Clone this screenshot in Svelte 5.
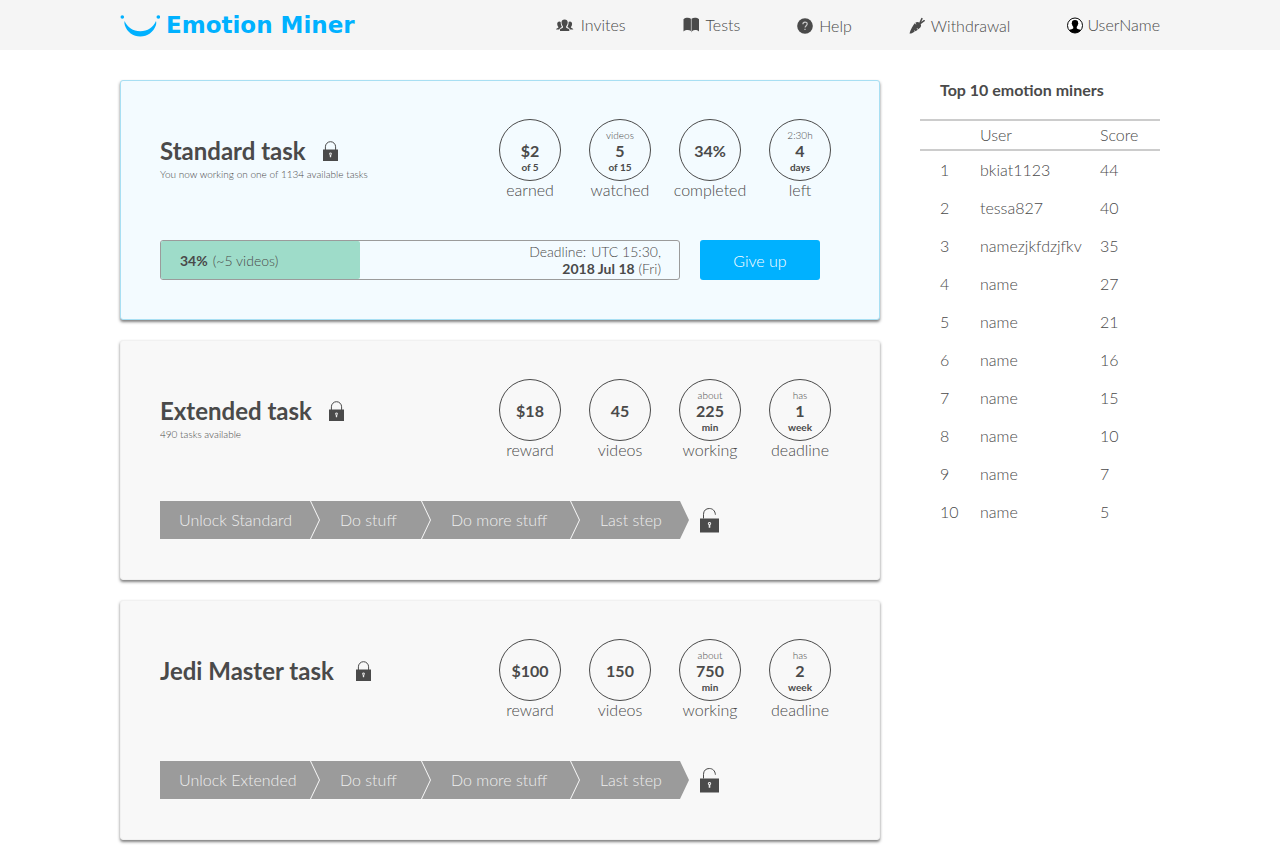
<script>
  const nav = [
    { icon: 'people', label: 'Invites' },
    { icon: 'book', label: 'Tests' },
    { icon: 'help', label: 'Help', low: true },
    { icon: 'carrot', label: 'Withdrawal', low: true },
    { icon: 'user', label: 'UserName' }
  ];

  const tasks = [
    {
      title: 'Standard task',
      note: 'You now working on one of 1134 available tasks',
      active: true,
      stats: [
        { value: '$2', below: 'of 5', label: 'earned' },
        { above: 'videos', value: '5', below: 'of 15', label: 'watched' },
        { value: '34%', label: 'completed' },
        { above: '2:30h', value: '4', below: 'days', label: 'left' }
      ],
      progress: 38.5
    },
    {
      title: 'Extended task',
      note: '490 tasks available',
      stats: [
        { value: '$18', label: 'reward' },
        { value: '45', label: 'videos' },
        { above: 'about', value: '225', below: 'min', label: 'working' },
        { above: 'has', value: '1', below: 'week', label: 'deadline' }
      ],
      steps: ['Unlock Standard', 'Do stuff', 'Do more stuff', 'Last step']
    },
    {
      title: 'Jedi Master task',
      roomy: true,
      stats: [
        { value: '$100', label: 'reward' },
        { value: '150', label: 'videos' },
        { above: 'about', value: '750', below: 'min', label: 'working' },
        { above: 'has', value: '2', below: 'week', label: 'deadline' }
      ],
      steps: ['Unlock Extended', 'Do stuff', 'Do more stuff', 'Last step']
    }
  ];

  const miners = [
    ['bkiat1123', 44],
    ['tessa827', 40],
    ['namezjkfdzjfkv', 35],
    ['name', 27],
    ['name', 21],
    ['name', 16],
    ['name', 15],
    ['name', 10],
    ['name', 7],
    ['name', 5]
  ];
</script>

<header class="topbar">
  <div class="wrap topbar-inner">
    <a class="logo" href="#home">
      <svg width="40" height="24" viewBox="0 0 40 24" aria-hidden="true">
        <circle cx="2.300" cy="4" r="1.800" />
        <circle cx="38.300" cy="4" r="1.800" />
        <path d="M4.500 8C7.500 14.500 13 18.300 20.300 18.300S33.300 14.500 36 8C36.500 9.500 36.300 11 35.800 12.500C33.500 19 27.500 23.500 20.300 23.500S7 19 4.900 12.500C4.400 11 4.200 9.500 4.500 8Z" />
      </svg>
      <span>Emotion Miner</span>
    </a>
    <nav>
      {#each nav as item}
        <a href="#{item.label.toLowerCase()}" class="nav-item" class:low={item.low} class:user={item.icon === 'user'}>
          {#if item.icon === 'people'}
            <svg width="19" height="16" viewBox="0 0 19 16" aria-hidden="true">
              <path d="M4 14v-1.500c.3-1 2.700-1.300 3-2V9.400C6 8.500 5.500 6.800 5.500 5.300 5.500 3.400 6.600 2.400 8.600 2.400s3.100 1 3.100 2.900c0 1.500-.6 3.200-1.600 4.100v1.100c.3.700 2.900 1 3.200 2V14Z" />
              <path d="M0 12.600c0-1.400 2.500-1.300 2.500-2.300C1.700 9.300 1.200 8.200 1.200 7c0-1.700.8-2.600 2.200-2.600.6 0 1 .2 1.300.5-.1 1.800.4 3.500 1.200 4.800C5.600 10.500 3.700 10.900 3.200 12.600ZM17.300 12.600c0-1.400-2.500-1.300-2.500-2.300.8-1 1.300-2.100 1.300-3.300 0-1.700-.8-2.600-2.200-2.600-.6 0-1 .2-1.300.5.1 1.800-.4 3.500-1.200 4.800.3.800 2.200 1.200 2.700 2.900Z" />
            </svg>
          {:else if item.icon === 'book'}
            <svg width="17" height="16" viewBox="0 0 17 16" aria-hidden="true">
              <path d="M.5 2.200C2.500.4 6 .3 7.900 1.700V14C6 12.700 2.600 12.800.5 14.500ZM8.500 1.700C10.500.3 14 .4 16 2.200v12.300c-2-1.700-5-1.800-6.800-.6L8.500 15.600Z" />
            </svg>
          {:else if item.icon === 'help'}
            <svg width="16" height="16" viewBox="0 0 16 16" aria-hidden="true">
              <circle cx="8" cy="8" r="7.800" />
              <path d="M5.900 6.200C5.900 3.400 10.200 3.500 10.200 6c0 1.700-2.100 1.800-2.100 3.600M8 10.800v1.300" fill="none" stroke="#c9c9c9" stroke-width="1.200" />
            </svg>
          {:else if item.icon === 'carrot'}
            <svg width="16" height="18" viewBox="0 0 16 18" aria-hidden="true">
              <path d="M.5 16.500C1.500 12.800 4 8.300 5.700 6.300l1.300 1.300.4-.4-1.100-1.400C7.700 4.700 9.300 4.600 10.500 5.800l.8.800c1.100 1.200 1 2.800 0 3.900l-2 1.700-1.300-1.300-.4.400 1.200 1.400-2.300 1.500-.9-.9-.4.400.6.800C4 15.600 1.800 16.900.5 16.500Z" />
              <path d="M11 5.800 12.900 1.600M11.500 6.300 15.200 3.700" fill="none" stroke="#4a4a4a" stroke-width="1.500" stroke-linecap="round" />
            </svg>
          {:else}
            <svg width="16" height="17" viewBox="0 0 16 17" aria-hidden="true">
              <circle cx="8" cy="8.500" r="7.500" fill="#fff" stroke="#000" />
              <path d="M2.300 13.300C3.500 12.200 6 12.300 6.300 11.300L6.200 9.800C5.500 9.200 5.200 8.300 5.100 7.500 4.500 7 4.600 6.300 4.900 6 4.700 3.800 5.800 2.900 8 2.900s3.300.9 3.100 3.100c.3.300.4 1-.2 1.500-.1.800-.4 1.700-1.100 2.300l-.1 1.500c.3 1 2.800.9 4 2C12 15 10.200 16 8 16s-4.500-1-5.700-2.700Z" fill="#000" />
            </svg>
          {/if}
          <span>{item.label}</span>
        </a>
      {/each}
    </nav>
  </div>
</header>

<div class="wrap page">
  <main>
    {#each tasks as task}
      <section class="card" class:active={task.active}>
        <div class="card-head">
          <div class="heading">
            <div class="title-row" class:roomy={task.roomy}>
              <h2>{task.title}</h2>
              <svg width="15" height="20" viewBox="0 0 15 20" aria-hidden="true">
                <path d="M2.400 9V5.800a5.100 5.100 0 0 1 10.200 0V9" fill="none" stroke="#4a4a4a" />
                <path d="M0 8.500h15V20H0Z" />
                <path d="M7.500 11.400a1.400 1.400 0 0 1 .8 2.500L8.100 16.200H6.900L6.700 13.900a1.400 1.400 0 0 1 .8-2.500Z" fill="#eee" />
                <circle cx="7.500" cy="12.900" r=".5" />
              </svg>
            </div>
            {#if task.note}<p class="note">{task.note}</p>{/if}
          </div>
          <ul class="stats">
            {#each task.stats as s}
              <li>
                <div class="ring">
                  <span class="above">{s.above ?? ''}</span>
                  <strong>{s.value}</strong>
                  <span class="below">{s.below ?? ''}</span>
                </div>
                <span class="label">{s.label}</span>
              </li>
            {/each}
          </ul>
        </div>

        {#if task.steps}
          <div class="unlock">
            <ol class="steps">
              {#each task.steps as step}<li>{step}</li>{/each}
            </ol>
            <svg width="19" height="26" viewBox="0 0 19 26" aria-hidden="true">
              <path d="M3.500 11.500V7.300C3.500 3.500 6 1.500 9.300 1.500c3.400 0 5.800 2.200 6.100 6.200" fill="none" stroke="#4a4a4a" />
              <path d="M0 11.500h19V25.500H0Z" />
              <path d="M9.500 14.900a1.700 1.700 0 0 1 .8 3.200v2.600H8.700v-2.600a1.700 1.700 0 0 1 .8-3.200Z" fill="#eee" />
              <circle cx="9.500" cy="16.600" r=".7" />
            </svg>
          </div>
        {:else}
          <div class="working">
            <div class="progress">
              <div class="fill" style="width: {task.progress}%"></div>
              <div class="progress-text">
                <span class="pair"><b>34%</b><span>(~5 videos)</span></span>
                <div class="deadline">
                  <span class="pair"><span>Deadline:</span><span>UTC 15:30,</span></span>
                  <span><b>2018 Jul 18</b> (Fri)</span>
                </div>
              </div>
            </div>
            <button type="button">Give up</button>
          </div>
        {/if}
      </section>
    {/each}
  </main>

  <aside>
    <h3>Top 10 emotion miners</h3>
    <table>
      <thead>
        <tr><th class="rank"></th><th class="name">User</th><th>Score</th></tr>
      </thead>
      <tbody>
        {#each miners as [name, score], i}
          <tr><td class="rank">{i + 1}</td><td>{name}</td><td>{score}</td></tr>
        {/each}
      </tbody>
    </table>
  </aside>
</div>

<style>
  :global(body) {
    background: #fff;
    color: #4a4a4a;
    font-family: Lato, sans-serif;
    font-size: 16px;
    font-weight: 300;
  }
  h2, h3, p, ul, ol { margin: 0; padding: 0; }
  ul, ol { list-style: none; }
  a { color: inherit; text-decoration: none; }
  svg { display: block; flex: none; fill: #4a4a4a; }
  b, strong { font-weight: 700; }

  .wrap {
    box-sizing: border-box;
    max-width: 1080px;
    margin: 0 auto;
    padding: 0 20px;
  }
  .topbar { background: #f5f5f5; }
  .topbar-inner {
    display: flex;
    align-items: center;
    justify-content: space-between;
    min-height: 50px;
  }
  .logo {
    display: flex;
    align-items: center;
    gap: 6px;
    color: #00b1ff;
    font: 700 23px/24px "DejaVu Sans", sans-serif;
  }
  .logo svg { fill: #00b1ff; }
  nav { display: flex; gap: 57px; }
  .nav-item {
    display: flex;
    align-items: center;
    gap: 6px;
    line-height: 20px;
  }
  .low { padding-top: 2px; }
  .user { gap: 4px; }

  .page {
    display: flex;
    align-items: flex-start;
    gap: 40px;
    padding-top: 30px;
    padding-bottom: 10px;
  }
  main {
    flex: 1;
    min-width: 0;
    display: grid;
    gap: 20px;
  }
  .card {
    padding: 38px 34px 39px 39px;
    border: 1px solid #f1f1f1;
    border-radius: 3px;
    background: #f8f8f8;
    box-shadow: 0 2px 3px rgba(0, 0, 0, 0.5);
  }
  .card.active {
    border-color: #a8dff3;
    background: #f3fbff;
  }
  .card-head {
    display: flex;
    justify-content: space-between;
    min-height: 121px;
  }
  .heading { padding-top: 17px; }
  .title-row {
    display: flex;
    align-items: center;
    gap: 17px;
  }
  .roomy { gap: 22px; }
  h2 {
    font-size: 24px;
    font-weight: 700;
    line-height: 30px;
  }
  .note {
    font-size: 10px;
    line-height: 16px;
  }
  .stats {
    display: grid;
    grid-template-columns: repeat(4, 90px);
    text-align: center;
  }
  .ring {
    box-sizing: border-box;
    display: grid;
    grid-template-rows: 12px 20px 12px;
    align-content: start;
    width: 62px;
    height: 62px;
    margin: 0 auto;
    padding-top: 9px;
    border: 1px solid #4a4a4a;
    border-radius: 50%;
    line-height: 20px;
  }
  .above, .below { font-size: 10px; line-height: 12px; }
  .below { font-weight: 700; }
  .label { display: block; line-height: 18px; }

  .working { display: flex; gap: 20px; padding-right: 25px; }
  .progress {
    flex: 1;
    display: grid;
    border: 1px solid #9b9b9b;
    border-radius: 3px;
    font-size: 14px;
    line-height: 17px;
  }
  .fill, .progress-text { grid-area: 1 / 1; }
  .fill { background: #9edcc9; border-radius: 2px; }
  .progress-text {
    display: flex;
    align-items: center;
    justify-content: space-between;
    padding: 2px 18px 2px 19px;
  }
  .pair { display: flex; gap: 5px; }
  .deadline {
    display: grid;
    justify-items: end;
  }
  button {
    width: 120px;
    height: 40px;
    padding: 0;
    border: 0;
    border-radius: 3px;
    background: #00b1ff;
    color: #fff;
    font: inherit;
  }

  .unlock { display: flex; align-items: center; gap: 11px; padding: 1px 0; }
  .steps {
    display: grid;
    grid-template-columns: 159px 111px 149px 110px;
  }
  .steps li {
    margin-left: -9px;
    padding-left: 30px;
    background: #9b9b9b;
    clip-path: polygon(0 0, calc(100% - 9px) 0, 100% 50%, calc(100% - 9px) 100%, 0 100%, 9px 50%);
    color: #eee;
    line-height: 38px;
    white-space: nowrap;
  }
  .steps li:first-child {
    margin-left: 0;
    padding-left: 19px;
    clip-path: polygon(0 0, calc(100% - 9px) 0, 100% 50%, calc(100% - 9px) 100%, 0 100%);
  }
  .steps li:not(:first-child) { margin-left: -8px; padding-left: 29px; }

  aside { width: 240px; }
  h3 {
    padding-left: 20px;
    margin-bottom: 19px;
    font-size: 16px;
    font-weight: 700;
    line-height: 20px;
  }
  table {
    width: 100%;
    border-spacing: 0;
    table-layout: fixed;
  }
  th, td {
    height: 38px;
    padding: 0;
    text-align: left;
    font-weight: 300;
    line-height: 20px;
  }
  th {
    height: 28px;
    border: solid #ccc;
    border-width: 2px 0;
  }
  .rank { width: 40px; padding-left: 20px; }
  .name { width: 120px; }
</style>
